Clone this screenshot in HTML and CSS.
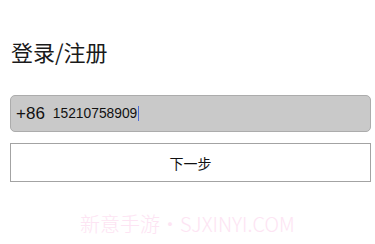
FILE: index.html
```html
<!DOCTYPE html>
<html lang="zh">
<head>
<meta charset="utf-8">
<link rel="stylesheet" href="styles.css">
</head>
<body>
<main class="page">
  <h1 class="title">登录/注册</h1>
  <div class="phone-field">
    <span class="prefix">+86</span>
    <span class="number">15210758909</span><span class="caret"></span>
  </div>
  <button class="next-btn" type="button">下一步</button>
  <div class="watermark">新意手游・SJXINYI.COM</div>
</main>
</body>
</html>
```

FILE: styles.css
```css
html, body {
  margin: 0;
  padding: 0;
  background: #ffffff;
}

body {
  width: 375px;
  height: 244px;
  overflow: hidden;
  font-family: "Liberation Sans", "Noto Sans CJK SC", sans-serif;
  color: #111111;
}

.page {
  padding: 40px 0 0 10px;
  width: 361px;
  display: flex;
  flex-direction: column;
}

.title {
  margin: 0 0 0 1px;
  font-family: "Noto Sans CJK SC", sans-serif;
  font-weight: 400;
  font-size: 22px;
  line-height: 22px;
  height: 22px;
  color: #1a1a1a;
}

.phone-field {
  margin-top: 33px;
  height: 35px;
  box-sizing: content-box;
  border: 1px solid #acacac;
  border-radius: 5px;
  background: #c9c9c9;
  display: flex;
  align-items: center;
  padding: 0 0 0 5px;
}

.prefix {
  font-size: 17px;
  line-height: 20px;
  color: #111111;
  margin-right: 8px;
}

.number {
  font-size: 13.8px;
  line-height: 18px;
  color: #111111;
}

.caret {
  display: inline-block;
  width: 1px;
  height: 15px;
  background: #4a6cd8;
  margin-left: 1px;
}

.next-btn {
  margin-top: 11px;
  height: 39px;
  width: 361px;
  border: 1px solid #a3a3a3;
  border-radius: 0;
  background: #ffffff;
  font-family: "Noto Sans CJK SC", sans-serif;
  font-size: 14px;
  color: #111111;
  padding: 0;
  display: flex;
  align-items: center;
  justify-content: center;
}

.watermark {
  margin-top: 31px;
  margin-left: 70px;
  font-family: "Noto Sans CJK SC", sans-serif;
  font-weight: 300;
  font-size: 20px;
  line-height: 22px;
  color: #fde4f3;
  white-space: nowrap;
}
```
